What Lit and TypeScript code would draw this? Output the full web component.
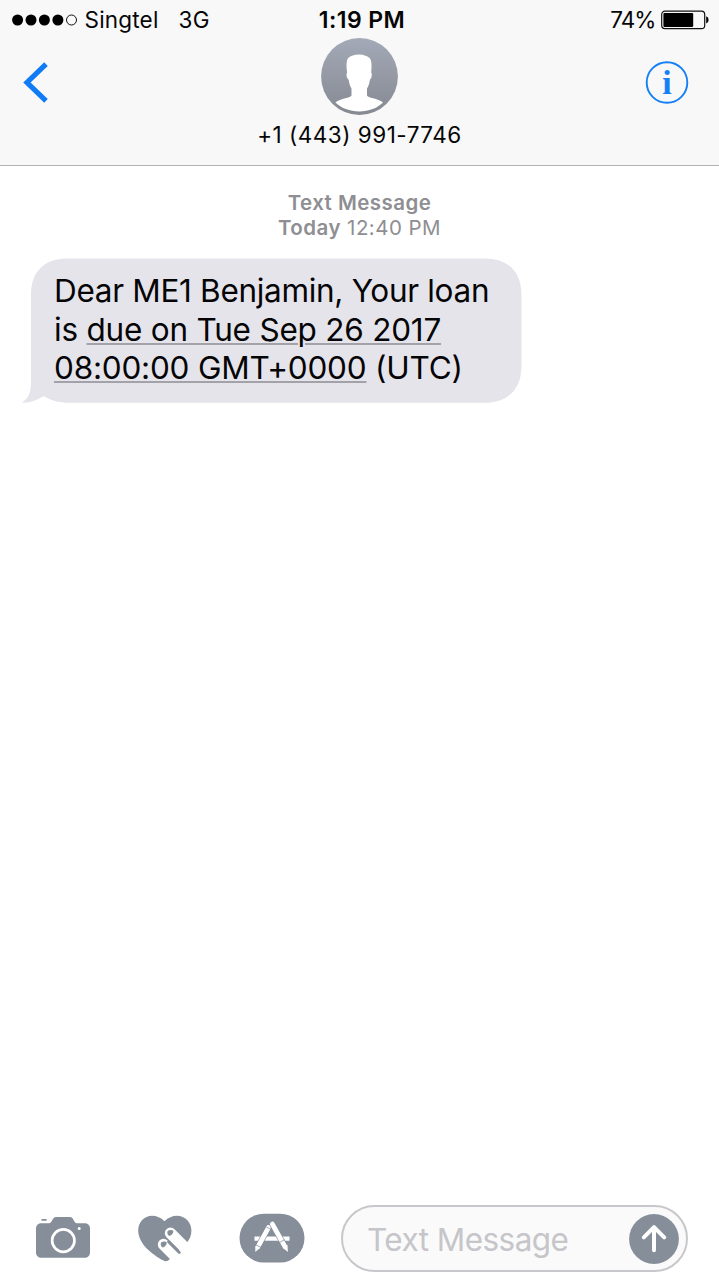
import { LitElement, html, css, svg } from "lit";
import { customElement } from "lit/decorators.js";

@customElement("status-bar")
class StatusBar extends LitElement {
  static styles = css`
    :host { display: grid; grid-template-columns: 1fr auto 1fr; align-items: center; height: 38px; padding: 0 10px 0 12px; box-sizing: border-box; font-size: 22.5px; line-height: 40px; white-space: nowrap; }
    .left { display: flex; align-items: center; }
    .dots { display: block; margin-right: 6.5px; }
    .carrier { letter-spacing: 0.2px; margin-right: 20px; }
    .net { letter-spacing: 0.2px; }
    .time { font-size: 23px; font-weight: 600; letter-spacing: 0.45px; padding-left: 3px; }
    .right { display: flex; align-items: center; justify-content: flex-end; gap: 5.6px; }
    .pct { letter-spacing: -1px; }
    .battery { display: block; }
  `;
  render() {
    return html`
      <div class="left">
        <svg class="dots" width="66" height="12" viewBox="0 0 66 12">
          ${[5.6, 19, 32.4, 45.9].map((x) => svg`<circle cx=${x} cy="6" r="5.5" />`)}
          <circle cx="59.5" cy="6" r="5" fill="none" stroke="#111" stroke-width="1" />
        </svg>
        <span class="carrier">Singtel</span><span class="net">3G</span>
      </div>
      <div class="time">1:19 PM</div>
      <div class="right">
        <span class="pct">74%</span>
        <svg class="battery" width="48" height="20" viewBox="0 0 48 20">
          <rect x="0.7" y="1.2" width="43" height="17.4" rx="3.2" fill="none" stroke="#111" stroke-width="1.2" />
          <rect x="2.4" y="2.9" width="29.8" height="14" rx="1.2" />
          <path d="M45.2 6.3q2.4.6 2.4 3.6t-2.4 3.6z" />
        </svg>
      </div>`;
  }
}

@customElement("contact-bar")
class ContactBar extends LitElement {
  static styles = css`
    :host { display: grid; grid-template-columns: 80px 1fr 80px; height: 127px; }
    .back { display: block; margin: 24px 0 0 23px; }
    .info { display: block; margin: 22px 0 0 6px; font-family: "Liberation Serif", serif; font-weight: 700; }
    .who { display: flex; flex-direction: column; align-items: center; }
    .avatar { display: block; }
    .number { font-size: 22.5px; line-height: 28px; margin-top: 6px; letter-spacing: 0.5px; white-space: nowrap; }
  `;
  render() {
    return html`
      <svg class="back" width="26" height="41" viewBox="0 0 26 41">
        <path d="M23 2.2 4 20.5 23 38.8" fill="none" stroke="#0f7cf6" stroke-width="5.2" />
      </svg>
      <div class="who">
        <svg class="avatar" width="77" height="77" viewBox="0 0 77 77">
          <defs>
            <linearGradient id="g" x1="0" y1="0" x2="0" y2="1">
              <stop offset="0" stop-color="#a4a9b8" /><stop offset="1" stop-color="#858991" />
            </linearGradient>
          </defs>
          <circle cx="38.5" cy="38.5" r="38.4" fill="url(#g)" />
          <path fill="#fff" d="M38 16.600C43 16.600 46.500 18.300 49 20.500 50.800 23 50.800 29 50.200 34.500 51.400 35.500 50.800 40.500 48.900 41.700 48.300 45.500 47.500 48.500 46 50.500V57.500C46.500 60 57 60 62 64.600 56 70.500 48 73.400 38.300 73.400S20.500 70.500 14.400 64.600C19.500 60 30 60 30.500 57.500V50.500C29 48.500 28.300 45.500 27.700 41.700 25.500 40.500 25 35.500 26.200 34.500 25.300 29 25.200 22.500 27 20.200 29.500 18 33.500 16.600 38 16.600z" />
        </svg>
        <div class="number">+1 (443) 991-7746</div>
      </div>
      <svg class="info" width="44" height="44" viewBox="0 0 44 44">
        <circle cx="22" cy="22.500" r="20.300" fill="none" stroke="#1580f5" stroke-width="1.900" />
        <text x="21.900" y="33.700" text-anchor="middle" font-size="34" fill="#1580f5">i</text>
      </svg>`;
  }
}

@customElement("message-bubble")
class MessageBubble extends LitElement {
  static styles = css`
    :host { display: grid; width: 501px; height: 146px; }
    .shape, .text { grid-area: 1 / 1; }
    .shape { display: block; }
    .text { padding: 14px 0 0 33px; font-size: 31.500px; line-height: 38.600px; white-space: nowrap; color: #050507; }
    .l1 { letter-spacing: -0.310px; }
    .l2 { letter-spacing: -0.220px; }
    .l3 { letter-spacing: -0.220px; }
    .link { text-decoration: underline; text-decoration-color: #a2a2a8; text-decoration-thickness: 1.500px; text-underline-offset: 2px; text-decoration-skip-ink: auto; }
  `;
  render() {
    return html`
      <svg class="shape" width="501" height="146" viewBox="0 0 501 146">
        <path fill="#e5e4ea" d="M46 .5H464C487 .5 500.500 14 500.500 37V108C500.500 131 487 144.800 464 144.800H47C38 144.800 29 142 22.500 138 16 142.500 8 145.200.8 144.500 8 140.500 10 133 10 124V37C10 14 23 .5 46 .5z" />
      </svg>
      <div class="text">
        <div class="l1">Dear ME1 Benjamin, Your loan</div>
        <div class="l2">is <span class="link">due on Tue Sep 26 2017</span></div>
        <div class="l3"><span class="link">08:00:00 GMT+0000</span> (UTC)</div>
      </div>`;
  }
}

@customElement("compose-bar")
class ComposeBar extends LitElement {
  static styles = css`
    :host { display: flex; align-items: center; height: 83px; padding: 0 31px 0 35px; box-sizing: border-box; }
    svg { display: block; flex: none; }
    .camera { margin: 0 46px 2px 0; }
    .heart { margin: 1px 47px 0 0; }
    .apps { margin: 0 36px 1px 0; }
    .field { flex: 1; height: 67px; box-sizing: border-box; border: 2px solid #c8c8cc; border-radius: 34px; background: #fafafa; display: flex; align-items: center; justify-content: space-between; padding: 0 7px 0 24px; }
    .hint { font-size: 31.500px; line-height: 40px; letter-spacing: -0.550px; color: #c5c5ca; white-space: nowrap; padding-top: 2px; }
  `;
  render() {
    return html`
      <svg class="camera" width="56" height="44" viewBox="0 0 56 44">
        <rect x="6.300" y="3" width="5.500" height="1.700" rx=".8" fill="#858e99" />
        <path fill="#858e99" d="M7 7.300h7c3.500 0 2.800-6.300 7.200-6.300h13.600c4.400 0 3.700 6.300 7.200 6.300h7c4 0 6 2 6 5.500v23.500c0 3.500-2 5.500-6 5.500H7c-4 0-6-2-6-5.500V12.800c0-3.500 2-5.500 6-5.500z" />
        <circle cx="28.300" cy="24.600" r="11.200" fill="none" stroke="#fff" stroke-width="2.700" />
        <circle cx="44.200" cy="12.500" r="1.500" fill="#fff" />
      </svg>
      <svg class="heart" width="55" height="48" viewBox="0 0 55 48">
        <path fill="#858e99" d="M27.500 6.300C31 2.700 35.500.8 40 .8c8 0 14.400 6.500 14.400 14.600 0 5-1.700 8.800-4.600 12.300L31.500 45.200c-1.300 1.200-3.400 1.200-5 .3C15 39.300 1.200 28.500 1.200 15.400 1.200 7.300 7.200.8 15 .8c4.600 0 9 1.900 12.500 5.500z" />
        <path d="M33.500 18.300 53.500 38.300M26.500 29.500 44.500 47.500" stroke="#fff" stroke-width="11.400" stroke-linecap="round" fill="none" />
        <path d="M31.500 26.700 42.300 37.500" stroke="#858e99" stroke-width="2.800" stroke-linecap="round" />
        <path fill="#858e99" d="M30.300 17.200c0-2.500 5-3 5.900-1.200.6 1.900-1.800 4.800-3.700 4.800-1.300 0-2.200-1.900-2.200-3.600zM23.700 28.800c0-2.500 5-3 5.900-1.200.6 1.900-1.800 4.800-3.700 4.800-1.300 0-2.200-1.900-2.200-3.600z" />
      </svg>
      <svg class="apps" width="66" height="50" viewBox="0 0 66 50">
        <rect x=".5" y=".7" width="65" height="48.800" rx="24.400" fill="#858e99" />
        <g stroke="#fff" fill="none">
          <path d="M15.500 25.600H50.500" stroke-width="4.400" />
          <path d="M29.400 14.800 19 33.600" stroke="#858e99" stroke-width="6" />
          <path d="M29.500 14.600 19 33.600" stroke-width="4.800" stroke-linecap="round" />
          <path d="M33.300 11.300 45.800 33.300" stroke="#858e99" stroke-width="6" />
          <path d="M33.300 11 45.800 33.300" stroke-width="4.800" stroke-linecap="round" />
        </g>
        <path fill="#fff" d="M16.300 33.200 21.300 34.800 16.300 39zM48.500 32 43.600 34.800 48.900 39z" />
        <path stroke="#858e99" stroke-width=".8" d="M16.500 31.600 22 34.600M40.500 29.500l4.900-2.800M27.500 14l4.500 2.500" />
      </svg>
      <div class="field">
        <span class="hint">Text Message</span>
        <svg width="50" height="50" viewBox="0 0 50 50">
          <circle cx="25" cy="25" r="24.900" fill="#858e99" />
          <path d="M25 36.300V13.500M14.800 23.300 25 13.100 35.200 23.300" fill="none" stroke="#fff" stroke-width="4" stroke-linecap="round" stroke-linejoin="round" />
        </svg>
      </div>`;
  }
}

@customElement("app-root")
class AppRoot extends LitElement {
  static styles = css`
    :host { display: flex; flex-direction: column; height: 1280px; background: #fff; color: #060606; font-family: Inter, "Liberation Sans", sans-serif; }
    .head { height: 166px; box-sizing: border-box; background: #f8f8f8; border-bottom: 1.500px solid #b2b2b4; flex: none; }
    .thread { flex: 1; padding: 24px 0 0 21px; }
    .stamp { margin: 0 21px 0 0; text-align: center; font-size: 20.500px; line-height: 25px; color: #8e8e93; }
    .stamp b { font-weight: 600; }
    .kind { letter-spacing: 0.450px; }
    .when { letter-spacing: 0.450px; }
    message-bubble { margin-top: 18px; }
  `;
  render() {
    return html`
      <div class="head"><status-bar></status-bar><contact-bar></contact-bar></div>
      <div class="thread">
        <div class="stamp">
          <div class="kind"><b>Text Message</b></div>
          <div class="when"><b>Today</b> 12:40 PM</div>
        </div>
        <message-bubble></message-bubble>
      </div>
      <compose-bar></compose-bar>`;
  }
}
